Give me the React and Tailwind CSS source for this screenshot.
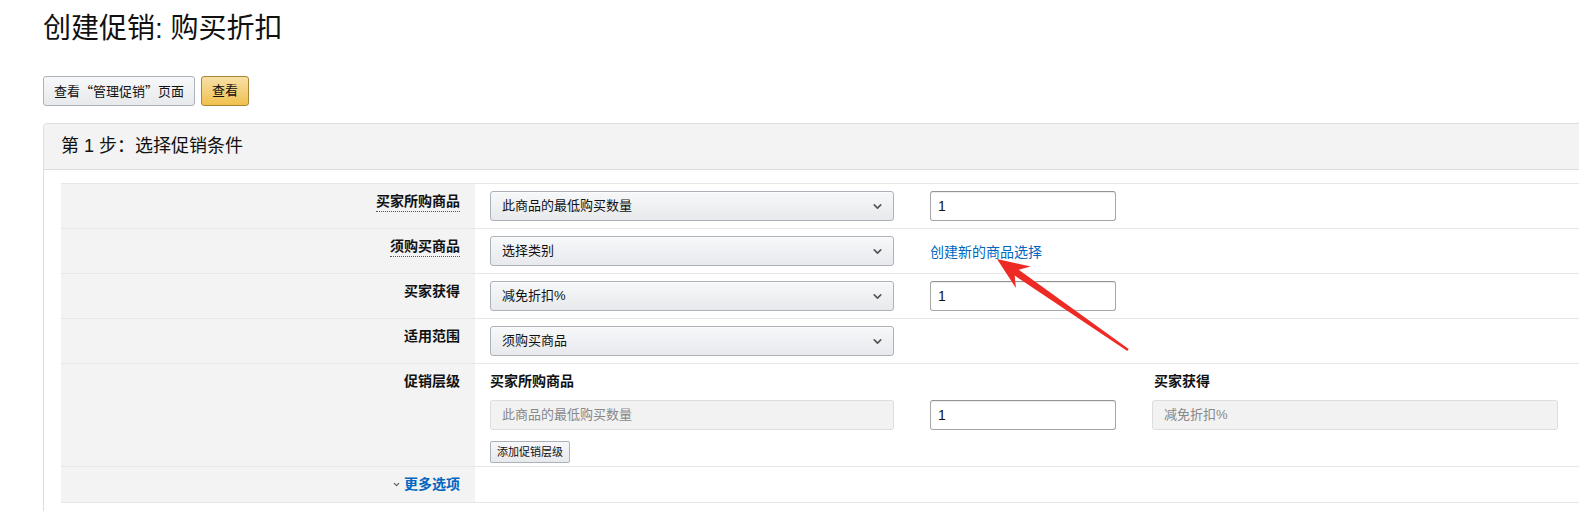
import { ChevronDown } from 'lucide-react'

const FONT = { fontFamily: '"Liberation Sans", "Noto Sans CJK SC", Arial, sans-serif' }
const CJK = { fontFamily: '"Noto Sans CJK SC", "Liberation Sans", sans-serif' }

function Select({ value }) {
  return (
    <div className="w-[404px] h-[30px] flex items-center justify-between pl-[11px] pr-[9px] rounded-[3px] border border-[#adb1b8] bg-gradient-to-b from-[#f7f8fa] to-[#e7e9ec] text-[13px] text-[#111] shadow-[0_1px_0_rgba(255,255,255,0.6)_inset]">
      <span>{value}</span>
      <ChevronDown size={13} strokeWidth={3} className="text-[#555]" />
    </div>
  )
}

function Input({ value }) {
  return (
    <div className="w-[186px] h-[30px] flex items-center px-[7px] rounded-[3px] border border-[#a6a6a6] border-t-[#949494] bg-white text-[14px] text-[#111] shadow-[0_1px_0_rgba(0,0,0,0.07)_inset]">
      {value}
    </div>
  )
}

function Disabled({ value, w }) {
  return (
    <div className={`${w} h-[30px] flex items-center px-[11px] rounded-[3px] border border-[#ddd] bg-[#f2f2f2] text-[13px] text-[#888]`}>
      {value}
    </div>
  )
}

function Label({ text, dotted }) {
  return (
    <div className="w-[414px] shrink-0 bg-[#f3f3f3] flex items-start justify-end pr-[15px] pt-[8px]">
      <span className={`text-[14px] font-bold text-[#111] leading-[19px] ${dotted ? 'border-b border-dotted border-[#555]' : ''}`}>{text}</span>
    </div>
  )
}

function Row({ label, dotted, children }) {
  return (
    <div className="flex h-[45px] border-b border-[#e7e7e7]">
      <Label text={label} dotted={dotted} />
      <div className="flex items-start gap-[36px] pl-[15px] pt-[7px]">{children}</div>
    </div>
  )
}

export default function App() {
  return (
    <div className="relative w-[1579px] h-[511px] overflow-hidden bg-white" style={FONT}>
      <div className="pl-[43px] pt-[11px]">
        <h1 className="text-[28px] leading-[36px] text-[#111] font-normal">创建促销: 购买折扣</h1>

        <div className="flex gap-[6px] mt-[29px]">
          <button style={CJK} className="h-[30px] px-[10px] rounded-[3px] border border-[#adb1b8] bg-gradient-to-b from-[#f7f8fa] to-[#e7e9ec] text-[13px] text-[#111]">
            查看“管理促销”页面
          </button>
          <button className="h-[30px] px-[10px] rounded-[3px] border border-[#a88734] bg-gradient-to-b from-[#f7dfa5] to-[#f0c14b] text-[13px] text-[#111]">
            查看
          </button>
        </div>

        <div className="mt-[17px] w-[1560px] border border-[#ddd] rounded-tl-[4px]">
          <div className="h-[46px] bg-[#f3f3f3] border-b border-[#ddd] flex items-center pl-[17px] text-[18px] text-[#111] rounded-tl-[4px]">
            第 1 步：选择促销条件
          </div>
          <div className="pl-[17px] pt-[13px] pb-[10px]">
            <div className="border-t border-[#e7e7e7]">
              <Row label="买家所购商品" dotted>
                <Select value="此商品的最低购买数量" />
                <Input value="1" />
              </Row>
              <Row label="须购买商品" dotted>
                <Select value="选择类别" />
                <a className="text-[14px] text-[#0066c0] mt-[6px]">创建新的商品选择</a>
              </Row>
              <Row label="买家获得">
                <Select value="减免折扣%" />
                <Input value="1" />
              </Row>
              <Row label="适用范围">
                <Select value="须购买商品" />
              </Row>
              <div className="flex h-[103px] border-b border-[#e7e7e7]">
                <Label text="促销层级" />
                <div className="pl-[15px] pt-[8px]">
                  <div className="flex gap-[36px]">
                    <div className="flex flex-col">
                      <span className="text-[14px] font-bold text-[#111] leading-[19px]">买家所购商品</span>
                      <div className="mt-[9px]"><Disabled value="此商品的最低购买数量" w="w-[404px]" /></div>
                      <button className="mt-[11px] self-start h-[22px] px-[6px] rounded-[2px] border border-[#adb1b8] bg-gradient-to-b from-[#f7f8fa] to-[#e7e9ec] text-[11px] text-[#111]">
                        添加促销层级
                      </button>
                    </div>
                    <div className="pt-[28px]"><Input value="1" /></div>
                    <div className="flex flex-col">
                      <span className="text-[14px] font-bold text-[#111] leading-[19px] pl-[2px]">买家获得</span>
                      <div className="mt-[9px]"><Disabled value="减免折扣%" w="w-[406px]" /></div>
                    </div>
                  </div>
                </div>
              </div>
              <div className="flex h-[36px] border-b border-[#e7e7e7]">
                <div className="w-[414px] shrink-0 bg-[#f3f3f3] flex justify-end items-center pr-[15px]">
                  <span className="flex items-center gap-[3px] text-[14px] font-bold text-[#0066c0]">
                    <ChevronDown size={9} strokeWidth={3} className="text-[#555]" />
                    更多选项
                  </span>
                </div>
              </div>
            </div>
          </div>
        </div>
      </div>

      <svg className="absolute left-0 top-0 pointer-events-none" width="1579" height="511">
        <polygon
          fill="#ee2a24"
          points="997,259 1030.7,266.6 1018.7,269.8 1128.7,349 1127.3,351 1014.7,275.6 1015.9,288"
        />
      </svg>
    </div>
  )
}
